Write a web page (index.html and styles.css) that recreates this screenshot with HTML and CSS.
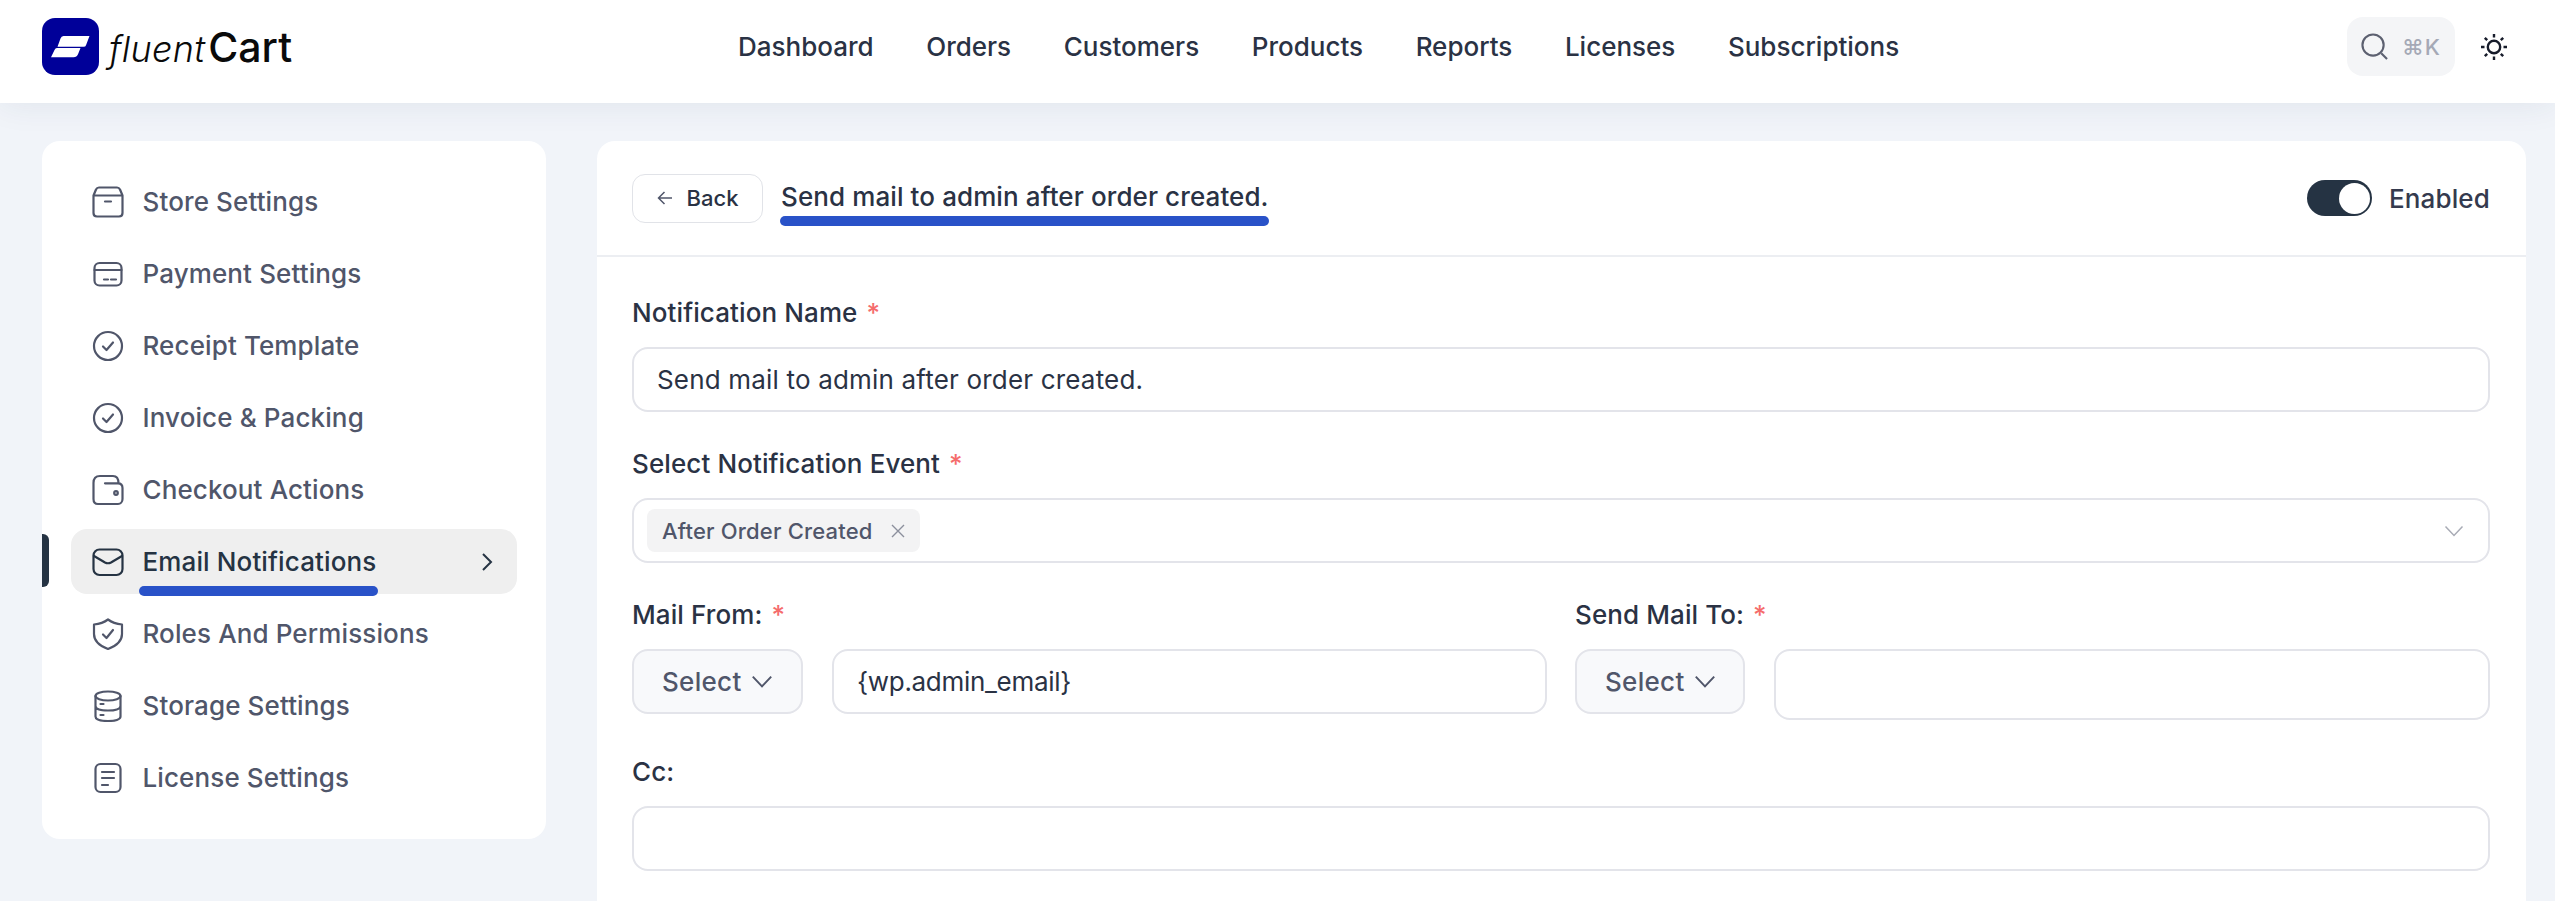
FILE: index.html
```html
<!DOCTYPE html>
<html lang="en">
<head>
<meta charset="utf-8">
<title>FluentCart - Email Notifications</title>
<link rel="stylesheet" href="styles.css">
</head>
<body>
<header class="topbar">
  <a class="brand">
    <svg class="brand-mark" viewBox="0 0 57 57"><rect width="57" height="57" rx="13" fill="#000099"/><path d="M21.5 18H47.5L44 27.2Q43.6 28.8 41.5 28.8H15.5L18.5 20.5Q19.3 18 21.5 18Z M15 30H38.5L36 36.2Q34.8 39.2 31.5 39.2H9L12.5 32Q13.3 30 15 30Z" fill="#fff"/></svg>
    <span class="brand-text"><span class="brand-light">fluent</span><span class="brand-bold">Cart</span></span>
  </a>
  <nav class="mainnav">
    <a>Dashboard</a><a>Orders</a><a>Customers</a><a>Products</a><a>Reports</a><a>Licenses</a><a>Subscriptions</a>
  </nav>
  <div class="tools">
    <div class="searchbox">
      <svg class="search-icon" viewBox="0 0 28 28"><circle cx="12.5" cy="12.5" r="11" /><path d="M21 21L27 27"/></svg>
      <span class="kbd">⌘K</span>
    </div>
    <svg class="sun" viewBox="0 0 28 28"><circle cx="14" cy="14" r="6.2"/><path d="M14 1V4.5M14 23.5V27M1 14H4.5M23.5 14H27M4.8 4.8L7.2 7.2M20.8 20.8L23.2 23.2M4.8 23.2L7.2 20.8M20.8 7.2L23.2 4.8"/></svg>
  </div>
</header>

<div class="page">
  <aside class="sidecard">
    <a class="sideitem">
      <svg class="icon" viewBox="0 0 32 32"><path d="M1.5 9.5L4 3.5Q5 1.5 7 1.5H25Q27 1.5 28 3.5L30.5 9.5V27Q30.5 30.5 27 30.5H5Q1.5 30.5 1.5 27ZM1.5 9.5H30.5M13 15.5H19"/></svg>
      <span>Store Settings</span>
    </a>
    <a class="sideitem">
      <svg class="icon" viewBox="0 0 32 32"><rect x="2.5" y="5" width="27" height="22.5" rx="5"/><path d="M2.5 12H29.5M12 21.5H16M19 21.5H24"/></svg>
      <span>Payment Settings</span>
    </a>
    <a class="sideitem">
      <svg class="icon" viewBox="0 0 32 32"><circle cx="16" cy="16" r="14"/><path d="M11 16.5L14.5 20L21 12.5"/></svg>
      <span>Receipt Template</span>
    </a>
    <a class="sideitem">
      <svg class="icon" viewBox="0 0 32 32"><circle cx="16" cy="16" r="14"/><path d="M11 16.5L14.5 20L21 12.5"/></svg>
      <span>Invoice &amp; Packing</span>
    </a>
    <a class="sideitem">
      <svg class="icon" viewBox="0 0 32 32"><path d="M1.5 9Q1.5 2 8 2H21C24.5 2 26.5 4.5 26.5 9.3M13 9.3H26C29 9.3 30.5 11 30.5 14V25C30.5 28 28.5 30 26 30H6C3 30 1.5 28 1.5 25V9"/><circle cx="24" cy="19" r="1.8"/></svg>
      <span>Checkout Actions</span>
    </a>
    <a class="sideitem active">
      <svg class="icon" viewBox="0 0 32 32"><rect x="1.5" y="3.5" width="29" height="25.5" rx="6"/><path d="M2 10L13 16.5Q16 18 19 16.5L30 10"/></svg>
      <span class="marked">Email Notifications</span>
      <svg class="chev-right" viewBox="0 0 12 20"><path d="M2 2L10 10L2 18"/></svg>
    </a>
    <a class="sideitem">
      <svg class="icon" viewBox="0 0 32 32"><path d="M16 1.5C20 4.5 25 6 30 6.5V16C30 23 24 28 16 31C8 28 2 23 2 16V6.5C7 6 12 4.5 16 1.5Z"/><path d="M11 16.5L14.5 20L21 12"/></svg>
      <span>Roles And Permissions</span>
    </a>
    <a class="sideitem">
      <svg class="icon" viewBox="0 0 32 32"><ellipse cx="16" cy="6" rx="12.5" ry="4.5"/><path d="M3.5 6V26.5C3.5 29.5 9 31 16 31S28.5 29.5 28.5 26.5V6M3.5 16C3.5 19 9 20.5 16 20.5S28.5 19 28.5 16M8.5 14H11.5M8.5 25H11.5"/></svg>
      <span>Storage Settings</span>
    </a>
    <a class="sideitem">
      <svg class="icon" viewBox="0 0 32 32"><rect x="3.5" y="2" width="25" height="28" rx="5"/><path d="M10 10H22M10 16H22M10 23H16"/></svg>
      <span>License Settings</span>
    </a>
  </aside>

  <main class="maincard">
    <div class="cardhead">
      <button class="backbtn">
        <svg class="back-arrow" viewBox="0 0 16 16"><path d="M15 8H2M7.5 2L1.5 8L7.5 14"/></svg>
        Back
      </button>
      <h1 class="title">Send mail to admin after order created.</h1>
      <div class="status">
        <span class="toggle"><span class="knob"></span></span>
        <span>Enabled</span>
      </div>
    </div>
    <form class="form">
      <div class="field">
        <div class="label">Notification Name <span class="req">*</span></div>
        <div class="control">Send mail to admin after order created.</div>
      </div>
      <div class="field">
        <div class="label">Select Notification Event <span class="req">*</span></div>
        <div class="control control-select">
          <span class="tag">After Order Created
            <svg class="tag-x" viewBox="0 0 14 14"><path d="M1 1L13 13M13 1L1 13"/></svg>
          </span>
          <svg class="select-chev" viewBox="0 0 20 12"><path d="M1.5 1.5L10 10.5L18.5 1.5"/></svg>
        </div>
      </div>
      <div class="columns">
        <div class="field">
          <div class="label">Mail From: <span class="req">*</span></div>
          <div class="group">
            <div class="addon addon-wide">Select <svg class="addon-chev" viewBox="0 0 20 12"><path d="M1.5 1.5L10 10.5L18.5 1.5"/></svg></div>
            <div class="control grow tight">{wp.admin_email}</div>
          </div>
        </div>
        <div class="field">
          <div class="label">Send Mail To: <span class="req">*</span></div>
          <div class="group group-to">
            <div class="addon">Select <svg class="addon-chev" viewBox="0 0 20 12"><path d="M1.5 1.5L10 10.5L18.5 1.5"/></svg></div>
            <div class="control grow tall"></div>
          </div>
        </div>
      </div>
      <div class="field">
        <div class="label">Cc:</div>
        <div class="control"></div>
      </div>
    </form>
  </main>
</div>
</body>
</html>
```
FILE: styles.css
```css
* { box-sizing: border-box; }
html, body { margin: 0; height: 100%; }
body {
  height: 100vh;
  overflow: hidden;
  display: flex;
  flex-direction: column;
  background: #f1f4f9;
  font-family: Inter, "Liberation Sans", sans-serif;
  color: #2a3244;
}

/* top bar */
.topbar {
  position: relative;
  z-index: 2;
  flex: none;
  height: 103px;
  display: flex;
  align-items: center;
  padding: 0 47px 10px 42px;
  background: #fff;
  box-shadow: 0 0 32px rgba(30, 50, 90, .09);
}
.brand { display: flex; align-items: center; gap: 9px; width: 696px; flex: none; }
.brand-mark { width: 57px; height: 57px; flex: none; }
.brand-text { display: flex; align-items: baseline; gap: 3px; color: #0a0a0a; line-height: 1; margin-top: 2px; margin-left: 1px; }
.brand-light { font-size: 36px; font-weight: 300; font-style: italic; letter-spacing: .3px; }
.brand-bold { font-size: 41px; font-weight: 500; }
.mainnav { display: flex; gap: 52.6px; font-size: 26px; font-weight: 500; white-space: nowrap; }
.tools { margin-left: auto; display: flex; align-items: center; gap: 25px; }
.searchbox {
  width: 108px;
  height: 59px;
  display: flex;
  align-items: center;
  gap: 14px;
  padding-left: 14px;
  border-radius: 16px;
  background: #f4f5f7;
}
.search-icon { width: 27px; height: 27px; fill: none; stroke: #5c6070; stroke-width: 2.2; flex: none; }
.kbd { font-size: 22px; font-weight: 500; color: #a5a9b6; letter-spacing: 1px; }
.sun { width: 28px; height: 28px; fill: none; stroke: #171c2b; stroke-width: 2.4; flex: none; }

/* page */
.page {
  flex: 1;
  min-height: 0;
  display: flex;
  gap: 51px;
  padding: 38px 29px 0 42px;
}

/* sidebar */
.sidecard {
  flex: none;
  align-self: flex-start;
  width: 504px;
  display: flex;
  flex-direction: column;
  gap: 7px;
  padding: 28px 29px 29px;
  background: #fff;
  border-radius: 18px;
}
.sideitem {
  position: relative;
  height: 65px;
  display: flex;
  align-items: center;
  gap: 18.5px;
  padding: 0 24px 0 21px;
  border-radius: 16px;
  font-size: 26px;
  line-height: 32px;
  font-weight: 500;
  letter-spacing: .12px;
  color: #50566a;
}
.icon { width: 32px; height: 32px; flex: none; fill: none; stroke: #50566a; stroke-width: 2.2; stroke-linecap: round; stroke-linejoin: round; }
.sideitem.active { background: #efefef; color: #253343; }
.sideitem.active .icon { stroke: #253343; }
.sideitem.active::before {
  content: "";
  position: absolute;
  left: -29px;
  top: 5px;
  width: 7px;
  height: 53px;
  border-radius: 0 6px 6px 0;
  background: #253343;
}
.marked { position: relative; }
.marked::after {
  content: "";
  position: absolute;
  left: -4px;
  right: -2px;
  top: 40px;
  height: 10px;
  border-radius: 5px;
  background: #2952c8;
}
.chev-right { margin-left: auto; width: 12px; height: 20px; fill: none; stroke: #253343; stroke-width: 2; }

/* main card */
.maincard {
  flex: 1;
  min-width: 0;
  background: #fff;
  border-radius: 18px 18px 0 0;
}
.cardhead {
  height: 116px;
  display: flex;
  align-items: center;
  padding: 0 36px 0 35px;
  border-bottom: 2px solid #eceef2;
}
.backbtn {
  width: 131px;
  height: 49px;
  display: flex;
  align-items: center;
  justify-content: center;
  gap: 14px;
  padding: 0;
  border: 1.5px solid #e1e3e8;
  border-radius: 13px;
  background: #fff;
  font: 500 22px Inter, "Liberation Sans", sans-serif;
  color: #2a3244;
}
.back-arrow { width: 16px; height: 16px; fill: none; stroke: #50566a; stroke-width: 1.5; }
.title {
  position: relative;
  margin: 0 0 3px 18px;
  font-size: 26px;
  line-height: 32px;
  font-weight: 500;
  letter-spacing: .1px;
  color: #2a3244;
  white-space: nowrap;
}
.title::after {
  content: "";
  position: absolute;
  left: -1px;
  right: 0;
  bottom: -13px;
  height: 10px;
  border-radius: 5px;
  background: #2952c8;
}
.status { margin-left: auto; display: flex; align-items: center; gap: 17px; font-size: 26px; font-weight: 500; letter-spacing: .15px; color: #343a4e; }
.toggle {
  width: 65px;
  height: 36px;
  display: flex;
  justify-content: flex-end;
  align-items: center;
  padding-right: 1.5px;
  border-radius: 18px;
  background: #253343;
}
.knob { width: 31px; height: 31px; border-radius: 50%; background: #fff; }

/* form */
.form {
  display: flex;
  flex-direction: column;
  gap: 33px;
  padding: 37px 36px 0 35px;
}
.field { min-width: 0; }
.label {
  height: 36px;
  margin-bottom: 17px;
  display: flex;
  align-items: center;
  gap: 9px;
  font-size: 26px;
  font-weight: 500;
  letter-spacing: .1px;
  color: #2a3244;
}
.req { color: #f56c6c; font-size: 26px; }
.control {
  height: 65px;
  display: flex;
  align-items: center;
  padding: 0 23px;
  border: 2px solid #e3e4ea;
  border-radius: 16px;
  background: #fff;
  font-size: 26px;
  letter-spacing: .18px;
  color: #2a3244;
}
.control-select { justify-content: space-between; padding: 0 24px 0 13px; }
.tag {
  height: 43px;
  width: 273px;
  display: flex;
  align-items: center;
  justify-content: space-between;
  padding: 0 15px 0 15px;
  border-radius: 8px;
  background: #f3f3f4;
  font-size: 22px;
  font-weight: 500;
  color: #50566a;
}
.tag-x { width: 14px; height: 14px; fill: none; stroke: #8b8f9c; stroke-width: 1.4; }
.select-chev { width: 20px; height: 12px; fill: none; stroke: #a8abb5; stroke-width: 1.5; }
.columns { display: grid; grid-template-columns: 1fr 1fr; gap: 28px; align-items: start; }
.group { display: flex; gap: 29px; align-items: flex-start; }
.addon {
  flex: none;
  width: 170px;
  height: 65px;
  display: flex;
  align-items: center;
  gap: 9px;
  padding-left: 28px;
  border: 2px solid #e3e4ea;
  border-radius: 16px;
  background: #f8f9fb;
  font-size: 26px;
  font-weight: 500;
  letter-spacing: .3px;
  color: #50566a;
}
.addon-wide { width: 171px; }
.addon-chev { width: 22px; height: 13px; fill: none; stroke: #50566a; stroke-width: 1.8; }
.grow { flex: 1; min-width: 0; }
.tight { letter-spacing: -.3px; }
.tall { height: 71px; }
```
